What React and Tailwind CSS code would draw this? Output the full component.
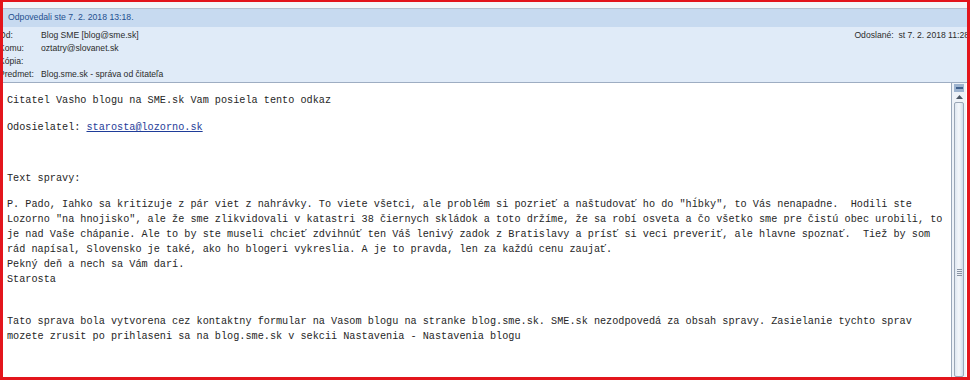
const bodyLines = [
  'P. Pado, Iahko sa kritizuje z pár viet z nahrávky. To viete všetci, ale problém si pozrieť a naštudovať ho do "hĺbky", to Vás nenapadne.  Hodili ste',
  'Lozorno "na hnojisko", ale že sme zlikvidovali v katastri 38 čiernych skládok a toto držíme, že sa robí osveta a čo všetko sme pre čistú obec urobili, to',
  'je nad Vaše chápanie. Ale to by ste museli chcieť zdvihnúť ten Váš lenivý zadok z Bratislavy a prísť si veci preveriť, ale hlavne spoznať.  Tiež by som',
  'rád napísal, Slovensko je také, ako ho blogeri vykreslia. A je to pravda, len za každú cenu zaujať.',
  'Pekný deň a nech sa Vám darí.',
  'Starosta',
];

const footerLines = [
  'Tato sprava bola vytvorena cez kontaktny formular na Vasom blogu na stranke blog.sme.sk. SME.sk nezodpovedá za obsah spravy. Zasielanie tychto sprav',
  'mozete zrusit po prihlaseni sa na blog.sme.sk v sekcii Nastavenia - Nastavenia blogu',
];

const headerRows = [
  ['Od:', 'Blog SME [blog@sme.sk]'],
  ['Komu:', 'oztatry@slovanet.sk'],
  ['Kópia:', ''],
  ['Predmet:', 'Blog.sme.sk - správa od čitateľa'],
];

const ScrollBar = () => (
  <div className="w-[15px] shrink-0 flex flex-col border-l border-[#9aa8bb] bg-[#eef2f8] mr-[1px]">
    {/* collapse button */}
    <div className="h-[8px] mx-[2px] mt-[1px] bg-[#9db3cf] flex items-center justify-center">
      <div className="w-[7px] h-[2px] bg-[#3f5f8c]" />
    </div>
    {/* up arrow */}
    <div className="h-[10px] flex items-center justify-center">
      <svg width="7" height="4" viewBox="0 0 7 4">
        <path d="M0 4 L3.5 0 L7 4 Z" fill="#4b5563" />
      </svg>
    </div>
    {/* thumb */}
    <div className="flex-1 mx-[2px] border border-[#9aa6b6] rounded-[2px] bg-gradient-to-r from-[#dfe7f1] via-[#f4f7fb] to-[#cfdbea] flex flex-col items-center justify-end pb-[100px]">
      <div className="flex flex-col gap-[1px]">
        <div className="w-[5px] h-[1px] bg-[#8893a3]" />
        <div className="w-[5px] h-[1px] bg-[#8893a3]" />
        <div className="w-[5px] h-[1px] bg-[#8893a3]" />
        <div className="w-[5px] h-[1px] bg-[#8893a3]" />
      </div>
    </div>
  </div>
);

const App = () => {
  return (
    <div className="w-[970px] h-[380px] overflow-hidden bg-white border-[#e3151c] border-t-2 border-b-[3px] border-l-[3px] border-r-[3px] flex flex-col font-['Liberation_Sans',Arial,sans-serif]">
      {/* top strip */}
      <div className="h-[7px] shrink-0 bg-[#f4f6f9] border-b border-[#b4c1d3]" />

      {/* reply info bar */}
      <div className="h-[18px] shrink-0 bg-[#c7daf0] flex items-center pl-[5px] text-[8.7px] text-[#24508f]">
        Odpovedali ste 7. 2. 2018 13:18.
      </div>

      {/* header fields */}
      <div className="h-[56px] shrink-0 bg-[#e0ebf8] border-b border-[#9eadc2] pt-[2px] flex">
        <div className="flex-1 flex flex-col -ml-[4px]">
          {headerRows.map(([label, value]) => (
            <div key={label} className="h-[13px] flex items-center text-[8.6px] text-[#2b2b2b]">
              <span className="w-[42px] shrink-0">{label}</span>
              <span>{value}</span>
            </div>
          ))}
        </div>
        <div className="h-[13px] flex items-center text-[8.6px] text-[#2b2b2b] whitespace-nowrap -mr-[2px]">
          <span className="w-[44px]">Odoslané:</span>
          <span>st 7. 2. 2018 11:28</span>
        </div>
      </div>

      {/* message body */}
      <div className="flex-1 flex min-h-0">
        <div className="flex-1 pl-[4px] pt-[10px] font-['Liberation_Mono','DejaVu_Sans_Mono',monospace] text-[10.2px] leading-[15px] text-[#262626] whitespace-pre overflow-hidden">
          <div>Citatel Vasho blogu na SME.sk Vam posiela tento odkaz</div>
          <div className="mt-[12px]">
            Odosielatel: <span className="text-[#1f3d99] underline">starosta@lozorno.sk</span>
          </div>
          <div className="mt-[36px]">Text spravy:</div>
          <div className="mt-[11px]">
            {bodyLines.map((line, i) => (
              <div key={i}>{line}</div>
            ))}
          </div>
          <div className="mt-[27px]">
            {footerLines.map((line, i) => (
              <div key={i}>{line}</div>
            ))}
          </div>
        </div>
        <ScrollBar />
      </div>
    </div>
  );
};

export default App;
